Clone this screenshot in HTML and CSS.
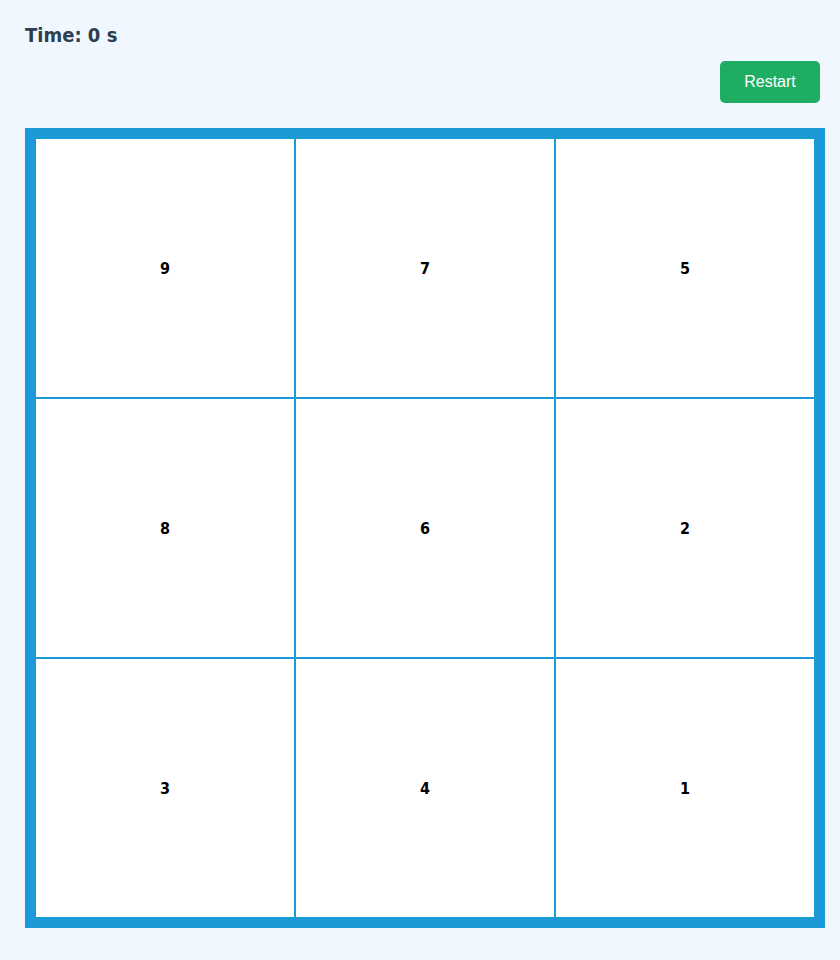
FILE: index.html
```html
<!DOCTYPE html>
<html>
<head>
<meta charset="utf-8">
<link rel="stylesheet" href="styles.css">
</head>
<body>
<div class="timer">Time: 0 s</div>
<div class="controls"><button class="restart">Restart</button></div>
<div class="board">
  <div class="cell">9</div>
  <div class="cell">7</div>
  <div class="cell">5</div>
  <div class="cell">8</div>
  <div class="cell">6</div>
  <div class="cell">2</div>
  <div class="cell">3</div>
  <div class="cell">4</div>
  <div class="cell">1</div>
</div>
</body>
</html>
```
FILE: styles.css
```css
html, body {
  margin: 0;
  background: #f0f7ff;
}
body {
  padding: 23px 25px 0 25px;
  font-family: "DejaVu Sans", sans-serif;
}
.timer {
  font-family: "DejaVu Sans Condensed", "DejaVu Sans", sans-serif;
  font-weight: bold;
  font-size: 20px;
  line-height: 24px;
  color: #2c3e50;
}
.controls {
  display: flex;
  justify-content: flex-end;
  margin-top: 14px;
  width: 800px;
}
.restart {
  width: 100px;
  height: 42px;
  margin-right: 5px;
  border: none;
  border-radius: 5px;
  background: #1fad63;
  color: #ffffff;
  font-family: "Liberation Sans", Arial, sans-serif;
  font-size: 16px;
  padding: 0;
}
.board {
  margin-top: 25px;
  width: 800px;
  height: 800px;
  box-sizing: border-box;
  border: 10px solid #1a9bd8;
  display: grid;
  grid-template-columns: repeat(3, 260px);
  grid-template-rows: repeat(3, 260px);
  background: #ffffff;
}
.cell {
  box-sizing: border-box;
  border: 1px solid #1a9bd8;
  display: flex;
  align-items: center;
  justify-content: center;
  font-family: "DejaVu Sans Condensed", "DejaVu Sans", sans-serif;
  font-weight: bold;
  font-size: 16px;
  color: #000000;
  background: #ffffff;
}
```
